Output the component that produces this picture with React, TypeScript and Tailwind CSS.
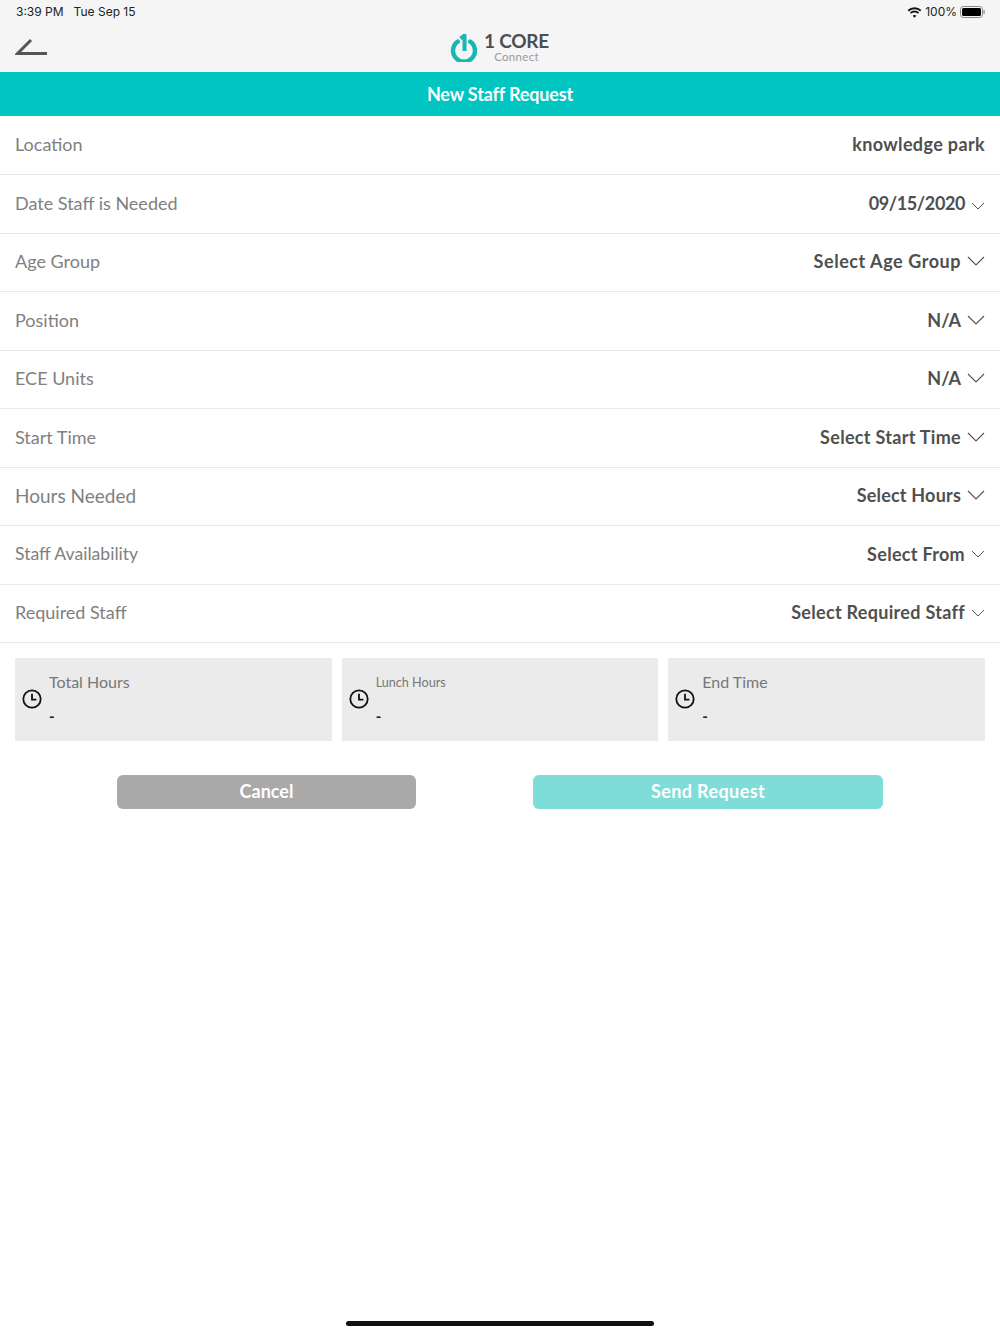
import React from 'react';

const font = "font-['Lato','Noto_Sans',sans-serif]";

const Chevron = ({ small }: { small?: boolean }) =>
    small ? (
        <svg width="14" height="8" viewBox="0 0 14 8" fill="none" className="ml-[6px] mt-[5px]">
            <path d="M1 1 L7 7 L13 1" stroke="#555" strokeWidth="1" />
        </svg>
    ) : (
        <svg width="18" height="10" viewBox="0 0 18 10" fill="none" className="ml-[6px] mt-[-1px]">
            <path d="M1 1 L9 9 L17 1" stroke="#555" strokeWidth="1.1" />
        </svg>
    );

const rows = [
    { label: 'Location', value: 'knowledge park', chevron: 'none', track: 'tracking-[0.36px]', labelCls: 'text-[18px]' },
    { label: 'Date Staff is Needed', value: '09/15/2020', chevron: 'small', track: 'tracking-[-0.4px]', labelCls: 'text-[18px]' },
    { label: 'Age Group', value: 'Select Age Group', chevron: 'big', track: 'tracking-[0.55px]', labelCls: 'text-[18px]' },
    { label: 'Position', value: 'N/A', chevron: 'big', track: 'tracking-[0px]', labelCls: 'text-[18px]' },
    { label: 'ECE Units', value: 'N/A', chevron: 'big', track: 'tracking-[0px]', labelCls: 'text-[18px]' },
    { label: 'Start Time', value: 'Select Start Time', chevron: 'big', track: 'tracking-[0.3px]', labelCls: 'text-[18px]' },
    { label: 'Hours Needed', value: 'Select Hours', chevron: 'big', track: 'tracking-[0.2px]', labelCls: 'text-[19px]' },
    { label: 'Staff Availability', value: 'Select From', chevron: 'smallMid', track: 'tracking-[0.3px]', labelCls: 'text-[17.6px]' },
    { label: 'Required Staff', value: 'Select Required Staff', chevron: 'smallMid', track: 'tracking-[0.3px]', labelCls: 'text-[18px]' },
];

const ClockIcon = () => (
    <svg width="20" height="20" viewBox="0 0 20 20" fill="none" className="shrink-0">
        <circle cx="10" cy="10" r="8.7" stroke="#111" strokeWidth="1.8" />
        <path d="M10 4.800 V10.600 H14.400" stroke="#111" strokeWidth="1.800" />
    </svg>
);

const InfoBox = ({ label, small }: { label: string; small?: boolean }) => (
    <div className="flex-1 h-[83px] bg-[#ebebeb] flex items-center pl-[7px]">
        <ClockIcon />
        <div className="ml-[7px] h-full flex flex-col">
            <span className={`leading-[20px] text-[#777] ${small ? 'mt-[15px] text-[12.6px]' : 'mt-[14px] text-[16px]'}`}>{label}</span>
            <span className={`leading-[20px] text-[15px] font-bold text-[#222] ${small ? 'mt-[13px]' : 'mt-[14px]'}`}>-</span>
        </div>
    </div>
);

export default function App() {
    return (
        <div className={`w-[1000px] h-[1334px] bg-white flex flex-col relative ${font}`}>
            <div className="h-[72px] bg-[#f5f5f5] relative flex flex-col shrink-0">
                <div className="h-[24px] flex items-center justify-between pl-[16px] pr-[15px] text-[12px] text-[#222] font-['Inter',sans-serif]">
                    <div className="flex gap-[10px]">
                        <span>3:39 PM</span>
                        <span>Tue Sep 15</span>
                    </div>
                    <div className="flex items-center gap-[3px]">
                        <svg width="15" height="11" viewBox="0 0 15 11" fill="#111">
                            <path d="M7.5 2.2c2.2 0 4.1.8 5.6 2.2l1.3-1.4A10 10 0 0 0 .6 3l1.3 1.4A8 8 0 0 1 7.5 2.2z" />
                            <path d="M7.5 5.4c1.3 0 2.5.5 3.4 1.3l1.2-1.4a6.8 6.8 0 0 0-9.2 0l1.2 1.4c.9-.8 2.1-1.3 3.4-1.3z" />
                            <path d="M7.5 8c-.8 0-1.3.3-1.8.7L7.5 10.8l1.8-2.1C8.8 8.300 8.300 8 7.500 8z" />
                        </svg>
                        <span>100%</span>
                        <svg width="25" height="12" viewBox="0 0 25 12" fill="none">
                            <rect x="0.5" y="0.5" width="22" height="11" rx="3" stroke="#888" />
                            <rect x="2" y="2" width="19" height="8" rx="1.500" fill="#000" />
                            <rect x="23.500" y="4" width="1.200" height="4" rx="0.600" fill="#888" />
                        </svg>
                    </div>
                </div>
                <div className="flex-1 flex items-center justify-center relative">
                    <svg width="34" height="24" viewBox="0 0 34 24" fill="none" className="absolute left-[15px] top-[14px]">
                        <path d="M16 2 L2.500 15.500 H32" stroke="#555" strokeWidth="3" />
                    </svg>
                    <div className="flex items-center gap-[6px] ml-[-1px] mt-[-1px]">
                        <svg width="28" height="28" viewBox="0 0 28 28" fill="none" className="mt-[1px]">
                            <path d="M7.800 7.500 A11 11 0 1 0 20.200 7.500" stroke="#17b8b4" strokeWidth="4.400" strokeLinecap="round" />
                            <path d="M10.500 4.500 L14.500 1.500 V17" stroke="#17b8b4" strokeWidth="4" />
                        </svg>
                        <div className="flex flex-col items-center mt-[-1px]">
                            <span className="text-[19px] leading-[20px] font-bold text-[#4a4f54] tracking-[-0.2px]">1 CORE</span>
                            <span className="text-[11.5px] leading-[12px] text-[#999] tracking-[0.3px] mt-[0px]">Connect</span>
                        </div>
                    </div>
                </div>
            </div>
            <div className="h-[44px] bg-[#00c5c1] flex items-center justify-center text-white text-[18px] font-bold tracking-[-0.15px] shrink-0">
                New Staff Request
            </div>
            <div className="mt-[0.5px]">
                {rows.map((row) => (
                    <div key={row.label} className="h-[58.5px] pb-[1px] border-b border-[#e9e9e9] flex items-center justify-between pl-[15px] pr-[15px]">
                        <span className={`${row.labelCls} text-[#808080]`}>{row.label}</span>
                        <div className={`flex items-center text-[18px] font-bold text-[#4f4f4f] ${row.track}`}>
                            <span>{row.value}</span>
                            {row.chevron === 'big' && <Chevron />}
                            {row.chevron === 'small' && <Chevron small />}
                            {row.chevron === 'smallMid' && (
                                <svg width="14" height="8" viewBox="0 0 14 8" fill="none" className="ml-[6px]">
                                    <path d="M1 1 L7 7 L13 1" stroke="#555" strokeWidth="1" />
                                </svg>
                            )}
                        </div>
                    </div>
                ))}
            </div>
            <div className="flex gap-[10px] px-[15px] mt-[14.5px]">
                <InfoBox label="Total Hours" />
                <InfoBox label="Lunch Hours" small />
                <InfoBox label="End Time" />
            </div>
            <div className="flex mt-[34px] pl-[117px] gap-[117px]">
                <button className="w-[299px] h-[34px] rounded-[6px] bg-[#a9a9a9] text-white text-[18px] font-bold">Cancel</button>
                <button className="w-[350px] h-[34px] rounded-[6px] bg-[#7fddd9] text-white text-[18px] font-bold tracking-[0.4px]">Send Request</button>
            </div>
            <div className="absolute left-[346px] top-[1321px] w-[308px] h-[5px] rounded-full bg-[#111]" />
        </div>
    );
}
